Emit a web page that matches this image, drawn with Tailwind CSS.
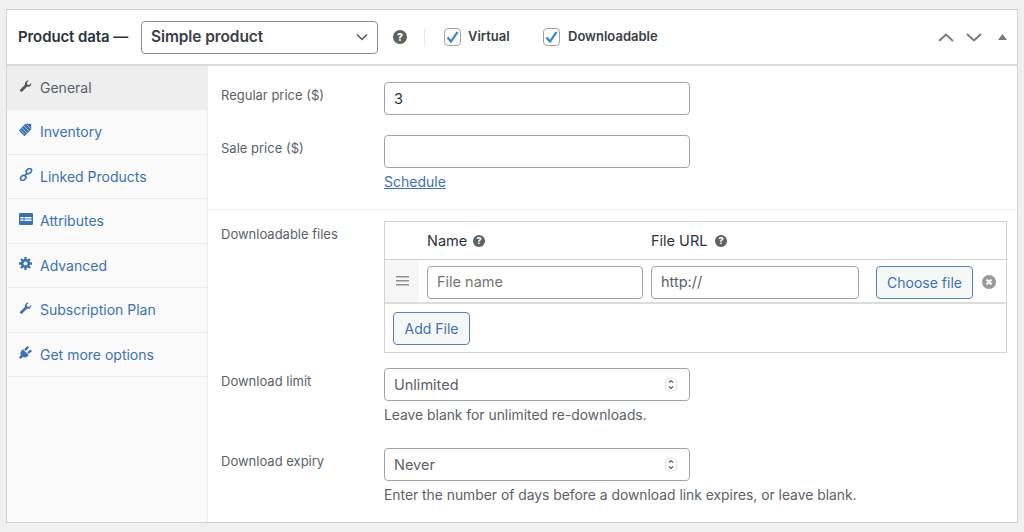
<!DOCTYPE html>
<html lang="en">
<head>
    <meta charset="UTF-8">
    <title>Product data</title>
    <script src="https://cdn.jsdelivr.net/npm/@tailwindcss/browser@4"></script>
</head>
<body class="bg-[#f0f0f1] h-[532px] overflow-hidden font-['Inter','Liberation_Sans',sans-serif] text-[#5a6168]">
    <div class="pt-[9px] pl-[6px] pr-[6px]">
        <div class="w-[1012px] h-[514px] bg-white border border-[#d0d2d5] flex flex-col">

            <!-- header -->
            <div class="h-[56px] shrink-0 border-b-2 border-[#dcdcde] flex items-center pl-[11px] pr-[10px]">
                <span class="text-[15px] font-semibold text-[#2c3338] w-[123px] whitespace-nowrap tracking-[-0.1px]">Product data —</span>
                <div class="w-[237px] h-[33px] border border-[#8c8f94] rounded-[4px] flex items-center justify-between pl-[9px] pr-[9px]">
                    <span class="text-[15.500px] font-semibold text-[#3a4046] tracking-[-0.1px]">Simple product</span>
                    <svg class="w-[12px] h-[8px]" viewBox="0 0 12 8" fill="none" stroke="#50575e" stroke-width="1.500"><path d="M1 1.500l5 5 5-5"/></svg>
                </div>
                <svg class="ml-[15px] w-[14px] h-[14px]" viewBox="0 0 14 14"><circle cx="7" cy="7" r="7" fill="#606060"/><text x="7" y="10.800" text-anchor="middle" font-size="10.500" font-weight="800" fill="#fff" font-family="Inter">?</text></svg>
                <div class="ml-[17px] w-px h-[17px] bg-[#e5e5e5]"></div>
                <div class="ml-[19px] w-[17px] h-[18px] border border-[#a0a3a8] rounded-[4px] flex items-center justify-center">
                    <svg class="w-[13px] h-[12px]" viewBox="0 0 13 12" fill="none" stroke="#3582c4" stroke-width="2.200"><path d="M1.500 6.500l3.500 4 6.500-9.500"/></svg>
                </div>
                <span class="ml-[7px] w-[75px] text-[13px] font-semibold text-[#3a4046]">Virtual</span>
                <div class="w-[17px] h-[18px] border border-[#a0a3a8] rounded-[4px] flex items-center justify-center">
                    <svg class="w-[13px] h-[12px]" viewBox="0 0 13 12" fill="none" stroke="#3582c4" stroke-width="2.200"><path d="M1.500 6.500l3.500 4 6.500-9.500"/></svg>
                </div>
                <span class="ml-[8px] text-[13px] font-semibold text-[#3a4046]">Downloadable</span>
                <div class="ml-auto flex items-center">
                    <svg class="w-[16px] h-[9px]" viewBox="0 0 16 9" fill="none" stroke="#787c82" stroke-width="2"><path d="M1 8l7-6.500 7 6.500"/></svg>
                    <svg class="ml-[12px] w-[16px] h-[9px]" viewBox="0 0 16 9" fill="none" stroke="#787c82" stroke-width="2"><path d="M1 1l7 6.500 7-6.500"/></svg>
                    <svg class="ml-[16px] w-[9px] h-[6px]" viewBox="0 0 9 6" fill="#787c82"><path d="M4.500 0l4.500 6h-9z"/></svg>
                </div>
            </div>

            <div class="flex flex-1 min-h-0">
                <!-- sidebar tabs -->
                <div class="w-[201px] shrink-0 bg-[#fafafa] border-r border-[#eeeeee] text-[14px] text-[#3b72b0]">
                    <div class="h-[44px] bg-[#eeeeee] flex items-center pl-[12px] pb-[1px] text-[#5a6168]">
                        <svg class="w-[13px] h-[13px] mr-[8px] mb-[3px]" viewBox="0 0 20 20" fill="#555"><path d="M19 5.500a5 5 0 0 1-6.800 4.700L5 17.500a2.100 2.100 0 0 1-3-3l7.300-7.200A5 5 0 0 1 15 1l-3 3 .700 3 3 .700 3-3a5 5 0 0 1 .300.800z"/></svg>
                        General
                    </div>
                    <div class="h-[44.500px] border-b border-[#eeeeee] flex items-center pl-[11px]">
                        <svg class="w-[14px] h-[14px] mr-[8px] mb-[3px]" viewBox="0 0 14 14"><path d="M7.500.800h5.700v5.700L6.500 13.200.800 7.500z" fill="#3b72b0"/><path d="M4 5l5 5M6 3l5 5M8.500 1.500l4 4M2.500 7l4 4" stroke="#c3d6ea" stroke-width=".700"/></svg>
                        Inventory
                    </div>
                    <div class="h-[44.500px] border-b border-[#eeeeee] flex items-center pl-[12px]">
                        <svg class="w-[14px] h-[13px] mr-[7px] mb-[3px]" viewBox="0 0 20 20" fill="none" stroke="#3b72b0" stroke-width="2.600"><rect x="10" y="1.500" width="9" height="6.500" rx="3.200" transform="rotate(-40 14.500 5)"/><rect x="1" y="12" width="9" height="6.500" rx="3.200" transform="rotate(-40 5.500 15)"/><path d="M7.500 12.500l5-5"/></svg>
                        Linked Products
                    </div>
                    <div class="h-[44.500px] border-b border-[#eeeeee] flex items-center pl-[12px]">
                        <svg class="w-[14px] h-[12px] mr-[7px] mb-[3px]" viewBox="0 0 14 12"><rect width="14" height="12" rx="1" fill="#3b72b0"/><path d="M1.500 4h3v1.500h-3zM1.500 6.500h3v1.500h-3zM5.500 4h7v1.500h-7zM5.500 6.500h7v1.500h-7z" fill="#fff"/></svg>
                        Attributes
                    </div>
                    <div class="h-[44.500px] border-b border-[#eeeeee] flex items-center pl-[12px]">
                        <svg class="w-[13px] h-[13px] mr-[8px] mb-[3px]" viewBox="0 0 20 20"><path d="M10 0v20M0 10h20M3 3l14 14M17 3l-14 14" stroke="#3b72b0" stroke-width="3.500"/><circle cx="10" cy="10" r="7" fill="#3b72b0"/><circle cx="10" cy="10" r="3" fill="#fafafa"/></svg>
                        Advanced
                    </div>
                    <div class="h-[44.500px] border-b border-[#eeeeee] flex items-center pl-[12px]">
                        <svg class="w-[13px] h-[13px] mr-[8px] mb-[3px]" viewBox="0 0 20 20" fill="#3b72b0"><path d="M19 5.500a5 5 0 0 1-6.800 4.700L5 17.500a2.100 2.100 0 0 1-3-3l7.300-7.200A5 5 0 0 1 15 1l-3 3 .700 3 3 .700 3-3a5 5 0 0 1 .300.800z"/></svg>
                        Subscription Plan
                    </div>
                    <div class="h-[44.500px] border-b border-[#eeeeee] flex items-center pl-[12px]">
                        <svg class="w-[13px] h-[13px] mr-[8px] mb-[3px]" viewBox="0 0 20 20" fill="#3b72b0"><path d="M6 5l9 9-2.500 2.500c-2 1.500-4.500 1.500-6.500.500L2.500 20 0 17.500 3 14c-1-2-1-4.500.500-6.500zM8 5l5-5 2.500 2.500-5 5zM12.500 9.500l5-4L20 8l-5 4z"/></svg>
                        Get more options
                    </div>
                </div>

                <!-- panel -->
                <div class="flex-1 min-w-0 text-[13px]">
                    <div class="h-[144px] border-b border-[#eeeeee] pl-[13px] pr-[10px] pt-[16px]">
                        <div class="flex h-[53px]">
                            <label class="w-[163px] pt-[4px] leading-[18px]">Regular price ($)</label>
                            <div class="w-[306px] h-[33px] border border-[#a0a3a8] rounded-[4px] flex items-center pl-[9px] text-[14.500px] text-[#2c3338]">3</div>
                        </div>
                        <div class="flex">
                            <label class="w-[163px] pt-[4px] leading-[18px]">Sale price ($)</label>
                            <div>
                                <div class="w-[306px] h-[33px] border border-[#a0a3a8] rounded-[4px]"></div>
                                <a class="block mt-[5px] text-[14px] leading-[18px] text-[#3b72b0] underline">Schedule</a>
                            </div>
                        </div>
                    </div>

                    <div class="flex pl-[13px] pt-[11px]">
                        <label class="w-[163px] pt-[4px] leading-[18px]">Downloadable files</label>
                        <div class="w-[623px] h-[132px] border border-[#d0d2d5] flex flex-col">
                            <div class="h-[37px] shrink-0 flex items-center text-[14.500px] text-[#2c3338]">
                                <span class="ml-[42px] w-[224px] flex items-center">Name
                                    <svg class="ml-[6px] w-[12px] h-[12px]" viewBox="0 0 14 14"><circle cx="7" cy="7" r="7" fill="#606060"/><text x="7" y="10.800" text-anchor="middle" font-size="10.500" font-weight="800" fill="#fff" font-family="Inter">?</text></svg>
                                </span>
                                <span class="flex items-center">File URL
                                    <svg class="ml-[8px] w-[12px] h-[12px]" viewBox="0 0 14 14"><circle cx="7" cy="7" r="7" fill="#606060"/><text x="7" y="10.800" text-anchor="middle" font-size="10.500" font-weight="800" fill="#fff" font-family="Inter">?</text></svg>
                                </span>
                            </div>
                            <div class="h-[45px] shrink-0 border-t border-b-2 border-t-[#d0d2d5] border-b-[#dcdcde] flex items-center text-[14.500px]">
                                <div class="w-[34px] h-full bg-[#f6f6f6] flex items-center justify-center">
                                    <svg class="w-[13px] h-[10px]" viewBox="0 0 13 10" fill="#8c8f94"><path d="M0 0h13v1.500H0zM0 4h13v1.500H0zM0 8h13v1.500H0z"/></svg>
                                </div>
                                <div class="ml-[8px] mt-[2px] w-[216px] h-[33px] border border-[#a0a3a8] rounded-[4px] flex items-center pl-[9px] text-[#757575]">File name</div>
                                <div class="ml-[8px] mt-[2px] w-[208px] h-[33px] border border-[#a0a3a8] rounded-[4px] flex items-center pl-[9px]">http://</div>
                                <div class="ml-[17px] mt-[2px] w-[97px] h-[33px] border border-[#4f84bd] rounded-[4px] bg-[#f6f7f7] flex items-center justify-center text-[14px] text-[#3b72b0]">Choose file</div>
                                <svg class="ml-[9px] mt-[2px] w-[14px] h-[14px]" viewBox="0 0 14 14"><circle cx="7" cy="7" r="7" fill="#999"/><path d="M4.500 4.500l5 5M9.500 4.500l-5 5" stroke="#fff" stroke-width="2"/></svg>
                            </div>
                            <div class="pl-[8px] pt-[8px]">
                                <div class="w-[77px] h-[33px] border border-[#4f84bd] rounded-[4px] bg-[#f6f7f7] flex items-center justify-center text-[14px] text-[#3b72b0]">Add File</div>
                            </div>
                        </div>
                    </div>

                    <div class="flex pl-[13px] pt-[15px]">
                        <label class="w-[163px] pt-[4px] leading-[18px]">Download limit</label>
                        <div>
                            <div class="w-[306px] h-[33px] border border-[#a0a3a8] rounded-[4px] flex items-center justify-between pl-[9px] pr-[12px] text-[14.500px]">
                                Unlimited
                                <svg class="w-[12px] h-[15px]" viewBox="0 0 12 14" fill="none" stroke="#50575e" stroke-width="1.200"><rect x=".500" y=".500" width="11" height="13" rx="4" stroke="#e5e5e5"/><path d="M3.800 5.200L6 3l2.200 2.200M3.800 8.800L6 11l2.200-2.200"/></svg>
                            </div>
                            <p class="mt-[5px] text-[13.850px] leading-[18px]">Leave blank for unlimited re-downloads.</p>
                        </div>
                    </div>

                    <div class="flex pl-[13px] pt-[24px]">
                        <label class="w-[163px] pt-[4px] leading-[18px]">Download expiry</label>
                        <div>
                            <div class="w-[306px] h-[33px] border border-[#a0a3a8] rounded-[4px] flex items-center justify-between pl-[9px] pr-[12px] text-[14.500px]">
                                Never
                                <svg class="w-[12px] h-[15px]" viewBox="0 0 12 14" fill="none" stroke="#50575e" stroke-width="1.200"><rect x=".500" y=".500" width="11" height="13" rx="4" stroke="#e5e5e5"/><path d="M3.800 5.200L6 3l2.200 2.200M3.800 8.800L6 11l2.200-2.200"/></svg>
                            </div>
                            <p class="mt-[5px] text-[13.850px] leading-[18px] whitespace-nowrap">Enter the number of days before a download link expires, or leave blank.</p>
                        </div>
                    </div>
                </div>
            </div>
        </div>
    </div>
</body>
</html>
